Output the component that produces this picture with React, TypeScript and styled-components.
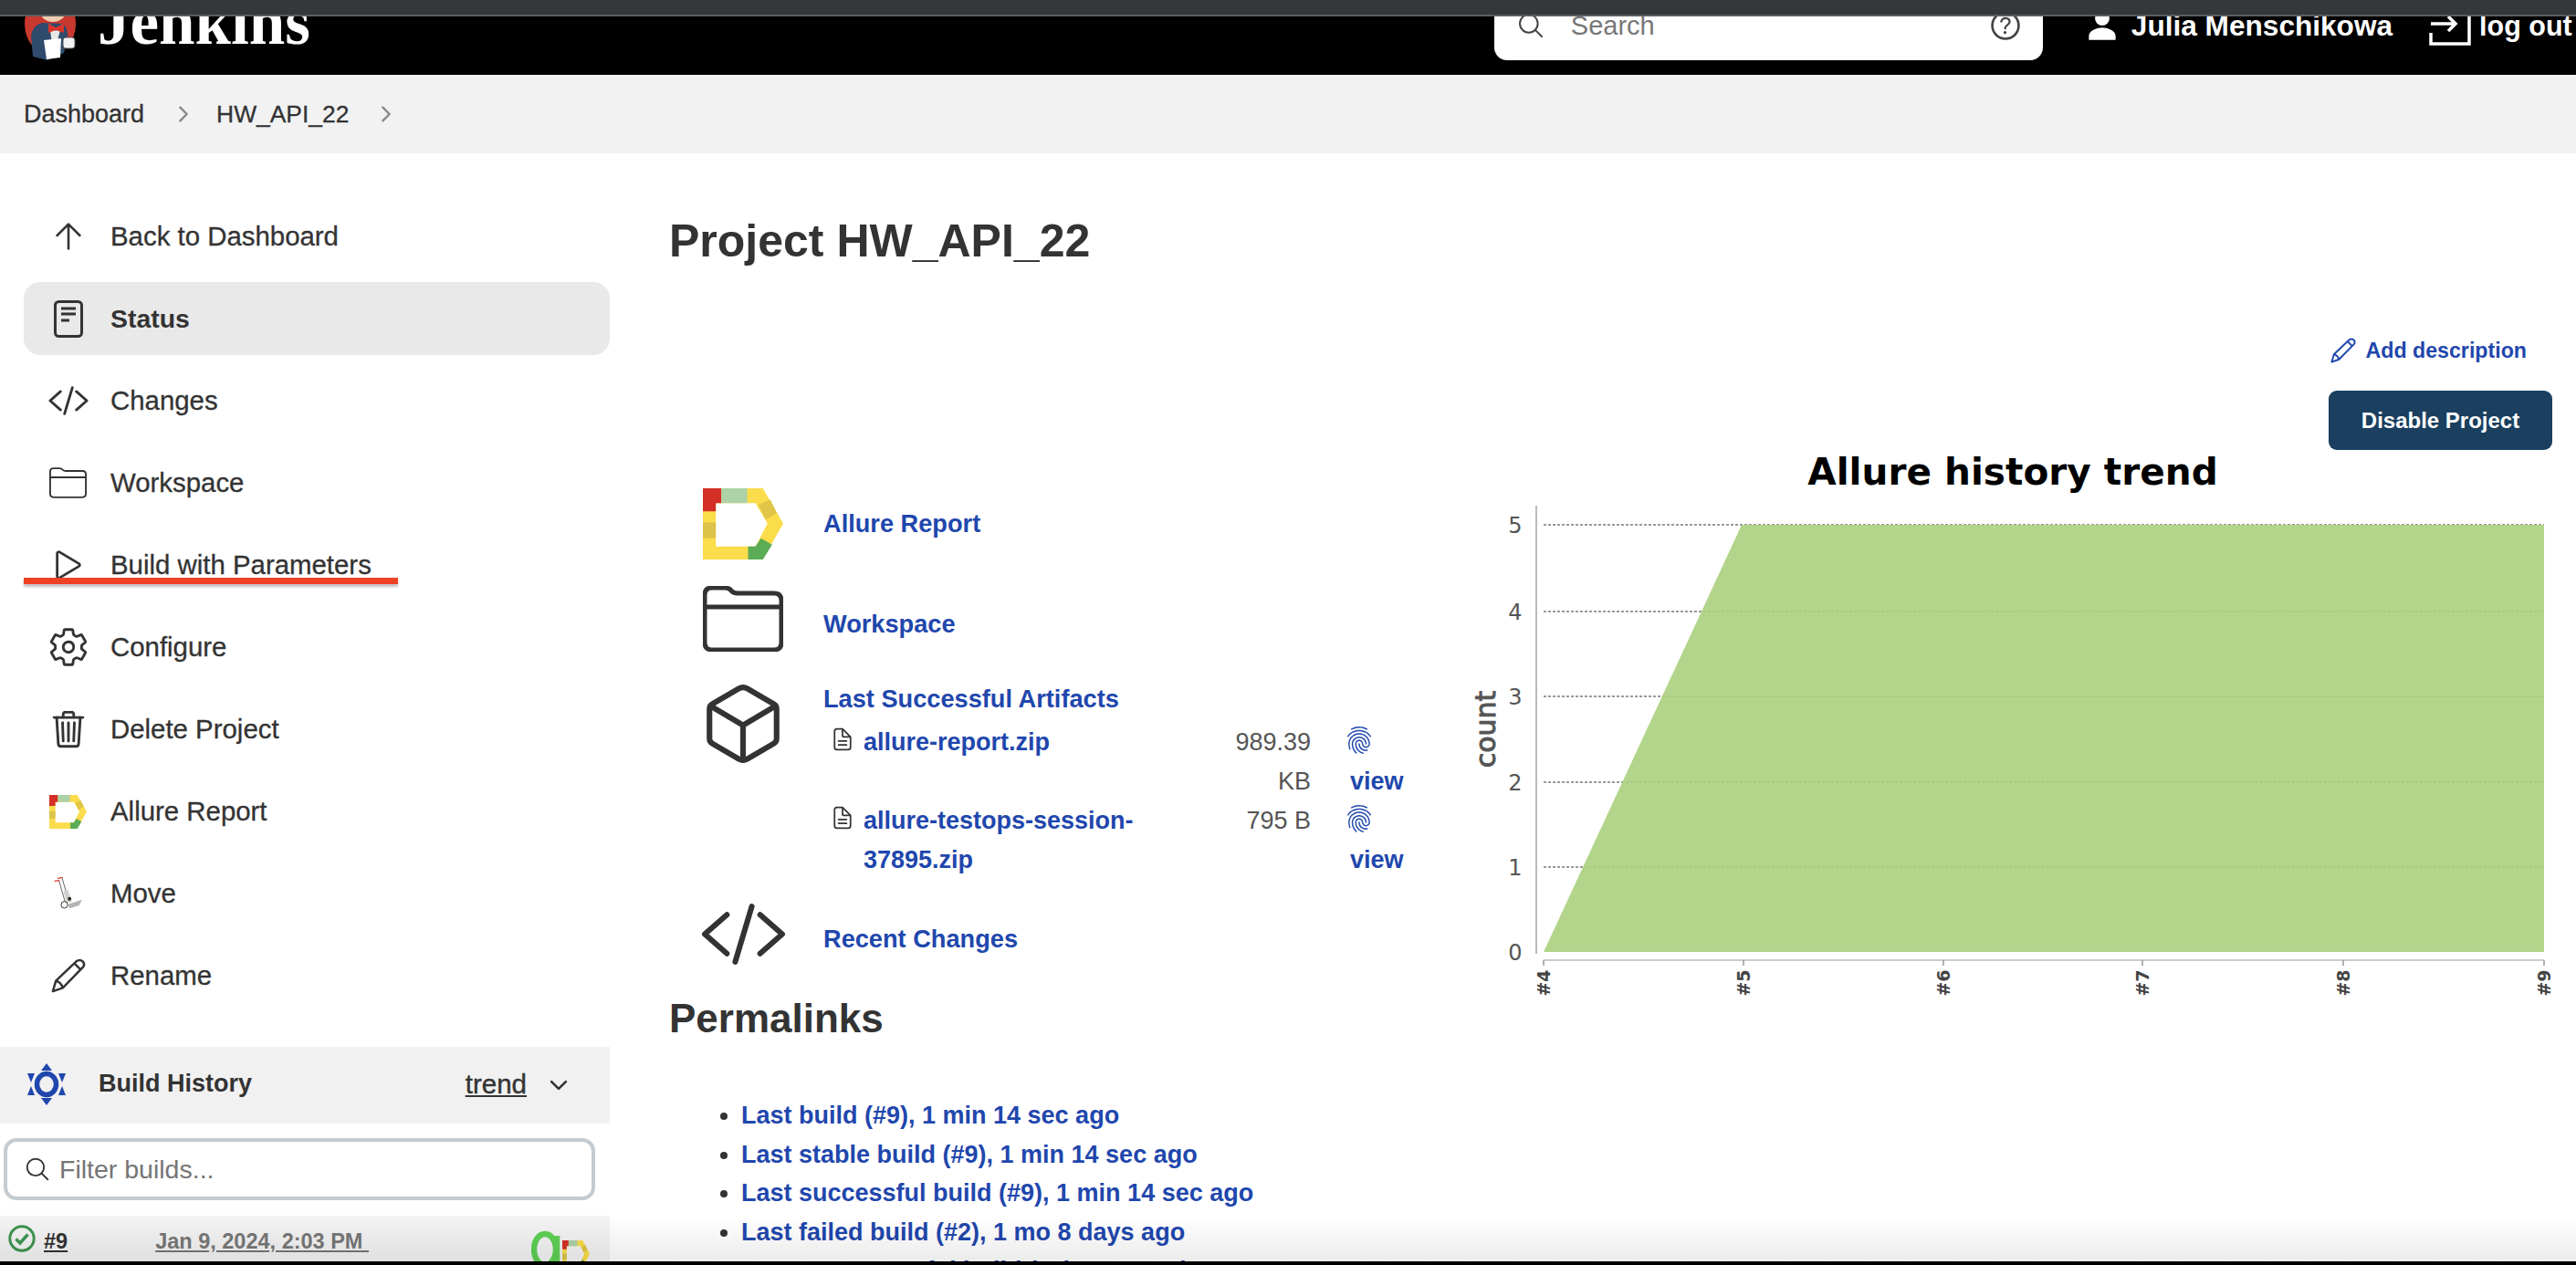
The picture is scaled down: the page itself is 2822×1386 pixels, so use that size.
import styled, { createGlobalStyle } from 'styled-components';
import {
  IoArrowUpOutline,
  IoChevronDownOutline,
  IoChevronForwardOutline,
  IoCodeSlashOutline,
  IoCubeOutline,
  IoDocumentTextOutline,
  IoFingerPrintOutline,
  IoHelpCircleOutline,
  IoPersonSharp,
  IoPlayOutline,
  IoSearchOutline,
  IoSettingsOutline,
  IoTrashOutline,
} from 'react-icons/io5';

const GlobalStyle = createGlobalStyle`
  html, body {
    margin: 0;
    padding: 0;
    background: #fff;
    overflow: hidden;
  }
  body {
    font-family: "Liberation Sans", Arial, sans-serif;
    color: #333;
  }
`;

const LINK = '#1f47ad';

function AllureIcon({ width, height }: { width: number; height: number }) {
  return (
    <svg width={width} height={height} viewBox="30 25 87 77" preserveAspectRatio="none">
      <path
        d="M30 25H95L117 63L95 102H30ZM44 41V88H87L100 63L87 41Z"
        fill="#fbdc4b"
        fillRule="evenodd"
      />
      <path d="M30 25H50V41H44V50H30Z" fill="#d32f27" />
      <rect x="50" y="25" width="28" height="16" fill="#aed2a7" />
      <path d="M90 43L103 37L110 52L98 59Z" fill="#e0c548" />
      <rect x="30" y="62" width="14" height="17" fill="#dcc44a" />
      <path d="M79 88H87L93 79L105 86L95 102H79Z" fill="#5cab55" />
    </svg>
  );
}

function FolderIcon({ width, height, stroke }: { width: number; height: number; stroke: number }) {
  return (
    <svg width={width} height={height} viewBox="0 0 88 72" fill="none" stroke="#333" strokeWidth={stroke}>
      <path d="M2 10Q2 2 10 2H24Q29 2 31 5Q33 8 38 8H78Q86 8 86 16V62Q86 70 78 70H10Q2 70 2 62Z" />
      <path d="M2 23H86" />
    </svg>
  );
}

function StatusIcon() {
  return (
    <svg width="32" height="41" viewBox="0 0 32 41" fill="none" stroke="#333">
      <rect x="1.5" y="1.5" width="29" height="38" rx="4" strokeWidth="3" />
      <path d="M8 9H24M8 15H24M8 22H17" strokeWidth="3" />
    </svg>
  );
}

function PencilIcon({ size, color, stroke }: { size: number; color: string; stroke: number }) {
  return (
    <svg width={size} height={size} viewBox="0 0 40 40" fill="none" stroke={color} strokeWidth={stroke} strokeLinejoin="round">
      <path d="M2 38L5.5 26L29 3.5Q33 0.5 36.5 3.5Q39.5 7 36.5 10.5L13.5 34Z" />
      <path d="M5.5 26Q11 27 13.5 34M27 6L34 13" />
    </svg>
  );
}

function MoveIcon() {
  return (
    <svg width="33" height="38" viewBox="105 85 100 115">
      <path d="M135 90L158 168M125 100L146 172" stroke="#666" strokeWidth="3" fill="none" />
      <path d="M120 92L137 89M110 101L127 99" stroke="#d5352b" strokeWidth="4" fill="none" />
      <path d="M140 135L155 130L168 170L150 175Z" fill="#cfd2cc" />
      <path d="M155 178L202 163L192 182L160 192Z" fill="#b3b5b0" />
      <circle cx="160" cy="160" r="6" fill="#222" />
      <circle cx="143" cy="180" r="11" fill="#fff" stroke="#333" strokeWidth="3" />
    </svg>
  );
}

function HistoryIcon() {
  return (
    <svg width="42" height="46" viewBox="0 0 42 46">
      <ellipse cx="21" cy="23" rx="10.5" ry="11.5" fill="none" stroke="#1f47ad" strokeWidth="5.5" />
      <g fill="#1f47ad">
        <path d="M21 0L15 8H27Z" />
        <path d="M21 46L15 38H27Z" />
        <path d="M0 11H8L4 21Z" />
        <path d="M42 11H34L38 21Z" />
        <path d="M0 35H8L4 25Z" />
        <path d="M42 35H34L38 25Z" />
      </g>
    </svg>
  );
}

function JenkinsLogo() {
  return (
    <svg width="70" height="80" viewBox="20 -10 70 80">
      <ellipse cx="55" cy="26" rx="28" ry="34" fill="#c8392f" />
      <ellipse cx="58" cy="10" rx="15" ry="14" fill="#f0cdb0" />
      <path d="M36 62L34 40Q35 28 46 25L68 26Q75 30 74 42L70 58L52 66Z" fill="#2f4a6b" />
      <path d="M54 26L61 34L68 26L62 48L57 48Z" fill="#e8e8e8" />
      <path d="M53 26L61 30L70 26L70 36L61 33L53 36Z" fill="#d8342a" />
      <path d="M48 44L67 42L66 63L51 65Z" fill="#fff" />
      <rect x="69" y="41" width="13" height="12" rx="3" fill="#f2f2f2" stroke="#555" strokeWidth="1" />
    </svg>
  );
}

function LogoutIcon() {
  return (
    <svg width="46" height="44" viewBox="0 0 46 44" fill="none" stroke="#fff" strokeWidth="3.5">
      <path d="M2 6V2H44V42H2V30" />
      <path d="M2 20H28M21 12L29 20L21 28" />
    </svg>
  );
}

function CheckIcon() {
  return (
    <svg width="30" height="30" viewBox="0 0 30 30" fill="none" stroke="#3f9450">
      <circle cx="15" cy="15" r="13.2" strokeWidth="3" />
      <path d="M8.5 15.5L13 20L21.5 10.5" strokeWidth="3.4" />
    </svg>
  );
}

function AgentIcon() {
  return (
    <svg width="34" height="44" viewBox="0 0 34 44" fill="none" stroke="#5dd054" strokeWidth="6.5">
      <ellipse cx="15" cy="21" rx="12" ry="17" />
      <path d="M28 6V40" />
    </svg>
  );
}

function Chart() {
  const rows = [
    { label: '5', y: 575 },
    { label: '4', y: 670 },
    { label: '3', y: 763 },
    { label: '2', y: 857 },
    { label: '1', y: 950 },
    { label: '0', y: 1043 },
  ];
  const cols = [
    { label: '#4', x: 1691 },
    { label: '#5', x: 1910 },
    { label: '#6', x: 2129 },
    { label: '#7', x: 2347 },
    { label: '#8', x: 2567 },
    { label: '#9', x: 2787 },
  ];
  return (
    <ChartFrame width="1222" height="620" viewBox="1600 493 1222 620">
      <text
        x="2205"
        y="531"
        textAnchor="middle"
        fontFamily="DejaVu Sans, sans-serif"
        fontWeight="700"
        fontSize="40.6"
        fill="#000"
      >
        Allure history trend
      </text>
      {rows.slice(0, 5).map((r) => (
        <line key={r.label} x1="1691" x2="2787" y1={r.y} y2={r.y} stroke="#9a9a9a" strokeWidth="2" strokeDasharray="3 2" />
      ))}
      <polygon points="1691,1043 1908,575 2787,575 2787,1043" fill="#abd07e" fillOpacity="0.9" />
      <line x1="1683" x2="1683" y1="554" y2="1045" stroke="#bbb" strokeWidth="2" />
      <line x1="1691" x2="2787" y1="1052" y2="1052" stroke="#ccc" strokeWidth="2" />
      {rows.map((r) => (
        <text
          key={r.label}
          x="1660"
          y={r.y + 9}
          textAnchor="middle"
          fontFamily="DejaVu Sans, sans-serif"
          fontSize="24"
          fill="#555"
        >
          {r.label}
        </text>
      ))}
      {cols.map((c) => (
        <g key={c.label}>
          <line x1={c.x} x2={c.x} y1="1052" y2="1058" stroke="#999" strokeWidth="1.5" />
          <text
            transform={`translate(${c.x + 7} 1077) rotate(-90)`}
            textAnchor="middle"
            fontFamily="DejaVu Sans, sans-serif"
            fontWeight="700"
            fontSize="19"
            fill="#444"
          >
            {c.label}
          </text>
        </g>
      ))}
      <text
        transform="translate(1638 799) rotate(-90)"
        textAnchor="middle"
        fontFamily="DejaVu Sans, sans-serif"
        fontSize="30"
        stroke="#555"
        strokeWidth="1"
        fill="#555"
      >
        count
      </text>
    </ChartFrame>
  );
}

const menu = [
  { label: 'Back to Dashboard', icon: <IoArrowUpOutline size={44} className="thin" /> },
  { label: 'Status', icon: <StatusIcon />, active: true },
  { label: 'Changes', icon: <IoCodeSlashOutline size={46} /> },
  { label: 'Workspace', icon: <FolderIcon width={41} height={34} stroke={4} /> },
  { label: 'Build with Parameters', icon: <IoPlayOutline size={44} />, marked: true },
  { label: 'Configure', icon: <IoSettingsOutline size={46} /> },
  { label: 'Delete Project', icon: <IoTrashOutline size={46} /> },
  { label: 'Allure Report', icon: <AllureIcon width={41} height={37} /> },
  { label: 'Move', icon: <MoveIcon /> },
  { label: 'Rename', icon: <PencilIcon size={38} color="#333" stroke={2.6} /> },
];

const permalinks = [
  'Last build (#9), 1 min 14 sec ago',
  'Last stable build (#9), 1 min 14 sec ago',
  'Last successful build (#9), 1 min 14 sec ago',
  'Last failed build (#2), 1 mo 8 days ago',
  'Last unsuccessful build (#8), 1 mo 8 days ago',
];

const artifacts = [
  { name: 'allure-report.zip', size: '989.39 KB' },
  { name: 'allure-testops-session-37895.zip', size: '795 B' },
];

export default function App() {
  return (
    <Page>
      <GlobalStyle />
      <WindowBar />
      <Header>
        <JenkinsLogo />
        <BrandName>Jenkins</BrandName>
        <SearchBox>
          <IoSearchOutline size={32} color="#444" />
          <SearchText>Search</SearchText>
          <IoHelpCircleOutline size={42} color="#444" />
        </SearchBox>
        <UserName>
          <IoPersonSharp size={36} />
          Julia Menschikowa
        </UserName>
        <LogOut>
          <LogoutIcon />
          log out
        </LogOut>
      </Header>
      <Breadcrumbs>
        <Crumb>Dashboard</Crumb>
        <IoChevronForwardOutline size={26} color="#888" />
        <Crumb $narrow>HW_API_22</Crumb>
        <IoChevronForwardOutline size={26} color="#888" />
      </Breadcrumbs>
      <Body>
        <Sidebar>
          <Menu>
            {menu.map((item) => (
              <MenuItem key={item.label} $active={item.active}>
                <IconSlot>{item.icon}</IconSlot>
                {item.label}
                {item.marked && <RedMark />}
              </MenuItem>
            ))}
          </Menu>
          <HistoryHeader>
            <HistoryIcon />
            <HistoryTitle>Build History</HistoryTitle>
            <TrendLink>trend</TrendLink>
            <IoChevronDownOutline size={28} color="#333" />
          </HistoryHeader>
          <FilterBox>
            <IoSearchOutline size={30} color="#333" />
            <FilterText>Filter builds...</FilterText>
          </FilterBox>
          <BuildRow>
            <CheckIcon />
            <BuildNumber>#9</BuildNumber>
            <BuildDate>Jan 9, 2024, 2:03 PM&nbsp;</BuildDate>
            <BuildBadges>
              <AgentIcon />
              <AllureIcon width={30} height={30} />
            </BuildBadges>
          </BuildRow>
        </Sidebar>
        <Main>
          <Title>Project HW_API_22</Title>
          <Actions>
            <AddDescription>
              <PencilIcon size={28} color={LINK} stroke={2.8} />
              Add description
            </AddDescription>
            <DisableButton>Disable Project</DisableButton>
          </Actions>
          <Columns>
            <LeftColumn>
              <Tasks>
                <TaskRow $height={78}>
                  <TaskIcon>
                    <AllureIcon width={88} height={78} />
                  </TaskIcon>
                  <TaskLink>Allure Report</TaskLink>
                </TaskRow>
                <TaskRow $height={72} $top={29} $shift={12}>
                  <TaskIcon>
                    <FolderIcon width={88} height={72} stroke={5} />
                  </TaskIcon>
                  <TaskLink>Workspace</TaskLink>
                </TaskRow>
                <ArtifactsRow>
                  <TaskIcon>
                    <IoCubeOutline size={98} color="#333" />
                  </TaskIcon>
                  <div>
                    <TaskLink>Last Successful Artifacts</TaskLink>
                    <ArtifactGrid>
                      {artifacts.map((a) => (
                        <ArtifactLine key={a.name}>
                          <IoDocumentTextOutline size={28} color="#333" />
                          <ArtifactName>{a.name}</ArtifactName>
                          <ArtifactSize>{a.size}</ArtifactSize>
                          <ViewCell>
                            <IoFingerPrintOutline size={32} color={LINK} />
                            <ViewLink>view</ViewLink>
                          </ViewCell>
                        </ArtifactLine>
                      ))}
                    </ArtifactGrid>
                  </div>
                </ArtifactsRow>
                <TaskRow $height={66} $top={26} $shift={12}>
                  <TaskIcon>
                    <IoCodeSlashOutline size={97} color="#333" />
                  </TaskIcon>
                  <TaskLink>Recent Changes</TaskLink>
                </TaskRow>
              </Tasks>
              <SubTitle>Permalinks</SubTitle>
              <Links>
                {permalinks.map((p) => (
                  <li key={p}>
                    <span>{p}</span>
                  </li>
                ))}
              </Links>
            </LeftColumn>
            <Chart />
          </Columns>
        </Main>
      </Body>
      <BottomEdge />
      <BottomFade />
    </Page>
  );
}

const Page = styled.div`
  position: relative;
  display: flex;
  flex-direction: column;
  width: 2822px;
  height: 1386px;
  overflow: hidden;
`;

const WindowBar = styled.div`
  flex: 0 0 16px;
  background: #36373b;
  border-bottom: 2px solid #5c5d62;
`;

const Header = styled.header`
  flex: 0 0 64px;
  display: flex;
  align-items: flex-start;
  overflow: hidden;
  background: #000;
  color: #fff;
  > svg:first-child {
    flex: none;
    margin: -28px 0 0 20px;
  }
`;

const BrandName = styled.div`
  margin: -34px 0 0 17px;
  font-family: "Liberation Serif", serif;
  font-size: 71px;
  line-height: 80px;
  font-weight: 700;
`;

const SearchBox = styled.div`
  display: flex;
  align-items: center;
  box-sizing: border-box;
  width: 601px;
  height: 48px;
  margin-left: 1297px;
  padding: 0 20px 28px 24px;
  background: #fff;
  border-radius: 0 0 14px 14px;
`;

const SearchText = styled.span`
  flex: 1;
  margin-left: 28px;
  font-size: 29px;
  color: #777;
`;

const UserName = styled.div`
  display: flex;
  align-items: center;
  gap: 14px;
  height: 20px;
  margin-left: 47px;
  font-size: 31.6px;
  font-weight: 700;
  white-space: nowrap;
`;

const LogOut = styled.div`
  display: flex;
  align-items: center;
  gap: 9px;
  height: 20px;
  margin-left: 40px;
  font-size: 30.5px;
  font-weight: 700;
  white-space: nowrap;
`;

const Breadcrumbs = styled.nav`
  flex: 0 0 86px;
  display: flex;
  align-items: center;
  gap: 30px;
  padding-left: 26px;
  background: #f2f2f2;
  font-size: 27px;
`;

const Crumb = styled.span<{ $narrow?: boolean }>`
  color: #333;
  -webkit-text-stroke: 0.3px #333;
  font-size: ${(p) => (p.$narrow ? '26.4px' : '27px')};
  margin: ${(p) => (p.$narrow ? '0 -2px 0 -7px' : '0')};
`;

const Body = styled.div`
  flex: 1;
  min-height: 0;
  display: flex;
  overflow: hidden;
`;

const Sidebar = styled.aside`
  flex: 0 0 668px;
`;

const Menu = styled.div`
  display: flex;
  flex-direction: column;
  gap: 10px;
  padding: 51px 0 38px 26px;
`;

const MenuItem = styled.div<{ $active?: boolean }>`
  position: relative;
  display: flex;
  align-items: center;
  height: 80px;
  border-radius: 18px;
  background: ${(p) => (p.$active ? '#e9e9e9' : 'transparent')};
  font-size: ${(p) => (p.$active ? '28.4px' : '29.4px')};
  font-weight: ${(p) => (p.$active ? 700 : 400)};
  color: #333;
  -webkit-text-stroke: ${(p) => (p.$active ? '0' : '0.3px #333')};
`;

const IconSlot = styled.span`
  flex: 0 0 95px;
  display: flex;
  justify-content: center;
  margin-left: 1px;
  margin-right: -1px;
  color: #333;
  -webkit-text-stroke: 0;
  .thin path {
    stroke-width: 30px;
  }
`;

const RedMark = styled.div`
  position: absolute;
  left: 0;
  top: 54px;
  width: 410px;
  height: 7px;
  background: #ee4023;
  box-shadow: 0 3px 3px rgba(0, 0, 0, 0.25);
`;

const HistoryHeader = styled.div`
  display: flex;
  align-items: center;
  height: 84px;
  padding: 0 0 3px 30px;
  box-sizing: border-box;
  background: #f1f1f1;
`;

const HistoryTitle = styled.span`
  margin-left: 36px;
  font-size: 27px;
  font-weight: 700;
  color: #333;
`;

const TrendLink = styled.span`
  margin-left: auto;
  font-size: 29.5px;
  text-decoration: underline;
  -webkit-text-stroke: 0.4px #333;
  color: #333;
  & + svg {
    margin: 2px 42px 0 21px;
  }
`;

const FilterBox = styled.div`
  display: flex;
  align-items: center;
  box-sizing: border-box;
  width: 648px;
  height: 68px;
  margin: 16px 0 17px 4px;
  padding-left: 18px;
  border: 4px solid #c3ccd2;
  border-radius: 14px;
  background: #fff;
`;

const FilterText = styled.span`
  margin-left: 9px;
  font-size: 28.5px;
  color: #757575;
`;

const BuildRow = styled.div`
  display: flex;
  align-items: flex-start;
  height: 60px;
  padding: 10px 0 0 9px;
  box-sizing: border-box;
  background: #f3f3f3;
`;

const BuildNumber = styled.span`
  margin: 3px 0 0 9px;
  font-size: 23.5px;
  line-height: 30px;
  font-weight: 700;
  text-decoration: underline;
  color: #333;
`;

const BuildDate = styled.span`
  margin: 3px 0 0 96px;
  font-size: 23.5px;
  line-height: 30px;
  font-weight: 700;
  text-decoration: underline;
  color: #777;
`;

const BuildBadges = styled.div`
  display: flex;
  align-items: flex-start;
  margin: 6px 22px 0 auto;
  > svg:last-child {
    margin-top: 11px;
  }
`;

const Main = styled.main`
  flex: 1;
  min-width: 0;
  padding-left: 65px;
`;

const Title = styled.h1`
  margin: 0;
  padding-top: 66px;
  font-size: 50px;
  line-height: 60px;
  font-weight: 700;
  color: #333;
`;

const Actions = styled.div`
  display: flex;
  flex-direction: column;
  align-items: flex-end;
  margin-top: 66px;
  padding-right: 26px;
`;

const AddDescription = styled.div`
  display: flex;
  align-items: center;
  gap: 11px;
  height: 48px;
  margin: 0 28px 20px 0;
  font-size: 23.2px;
  font-weight: 700;
  color: ${LINK};
`;

const DisableButton = styled.button`
  width: 245px;
  height: 65px;
  border: none;
  border-radius: 9px;
  background: #1a3f5f;
  color: #fff;
  font-family: inherit;
  font-size: 24px;
  font-weight: 700;
`;

const Columns = styled.div`
  display: flex;
  align-items: flex-start;
`;

const LeftColumn = styled.div`
  flex: 0 0 802px;
  min-width: 0;
  margin-right: 65px;
`;

const ChartFrame = styled.svg`
  flex: none;
`;

const Tasks = styled.div`
  padding-top: 42px;
`;

const TaskRow = styled.div<{ $height: number; $top?: number; $shift?: number }>`
  display: flex;
  align-items: center;
  height: ${(p) => p.$height}px;
  margin-top: ${(p) => p.$top ?? 0}px;
  > span:last-child {
    padding-top: ${(p) => p.$shift ?? 0}px;
  }
`;

const TaskIcon = styled.span`
  flex: 0 0 169px;
  display: flex;
  justify-content: center;
  align-items: center;
  box-sizing: border-box;
  height: 100%;
  padding-right: 7px;
`;

const TaskLink = styled.span`
  font-size: 27.2px;
  line-height: 30px;
  font-weight: 700;
  color: ${LINK};
`;

const ArtifactsRow = styled.div`
  display: flex;
  align-items: flex-start;
  margin-top: 36px;
  > span:first-child {
    height: 86px;
  }
  > div {
    padding-top: 1px;
  }
`;

const ArtifactGrid = styled.div`
  display: flex;
  flex-direction: column;
  margin-top: 11px;
`;

const ArtifactLine = styled.div`
  display: grid;
  grid-template-columns: 44px 320px 170px 99px;
  line-height: 43px;
  font-size: 27px;
  > svg {
    margin: 4px 0 0 7px;
  }
`;

const ArtifactName = styled.span`
  font-weight: 700;
  color: ${LINK};
`;

const ArtifactSize = styled.span`
  justify-self: end;
  width: 90px;
  text-align: right;
  color: #555;
`;

const ViewCell = styled.div`
  display: flex;
  flex-direction: column;
  align-items: flex-start;
  padding-left: 37px;
  white-space: nowrap;
  > svg {
    height: 38px;
    margin-bottom: 5px;
  }
`;

const ViewLink = styled.span`
  margin-left: 6px;
  font-weight: 700;
  color: ${LINK};
`;

const SubTitle = styled.h2`
  margin: 35px 0 0;
  font-size: 44px;
  line-height: 50px;
  font-weight: 700;
  color: #333;
`;

const Links = styled.ul`
  margin: 60px 0 0;
  padding-left: 79px;
  font-size: 27px;
  line-height: 42.5px;
  color: #333;
  span {
    font-weight: 700;
    color: ${LINK};
  }
`;

const BottomEdge = styled.div`
  flex: 0 0 4px;
  background: #000;
`;

const BottomFade = styled.div`
  position: absolute;
  left: 0;
  right: 0;
  bottom: 4px;
  height: 50px;
  background: linear-gradient(rgba(0, 0, 0, 0), rgba(0, 0, 0, 0.08));
  pointer-events: none;
`;
